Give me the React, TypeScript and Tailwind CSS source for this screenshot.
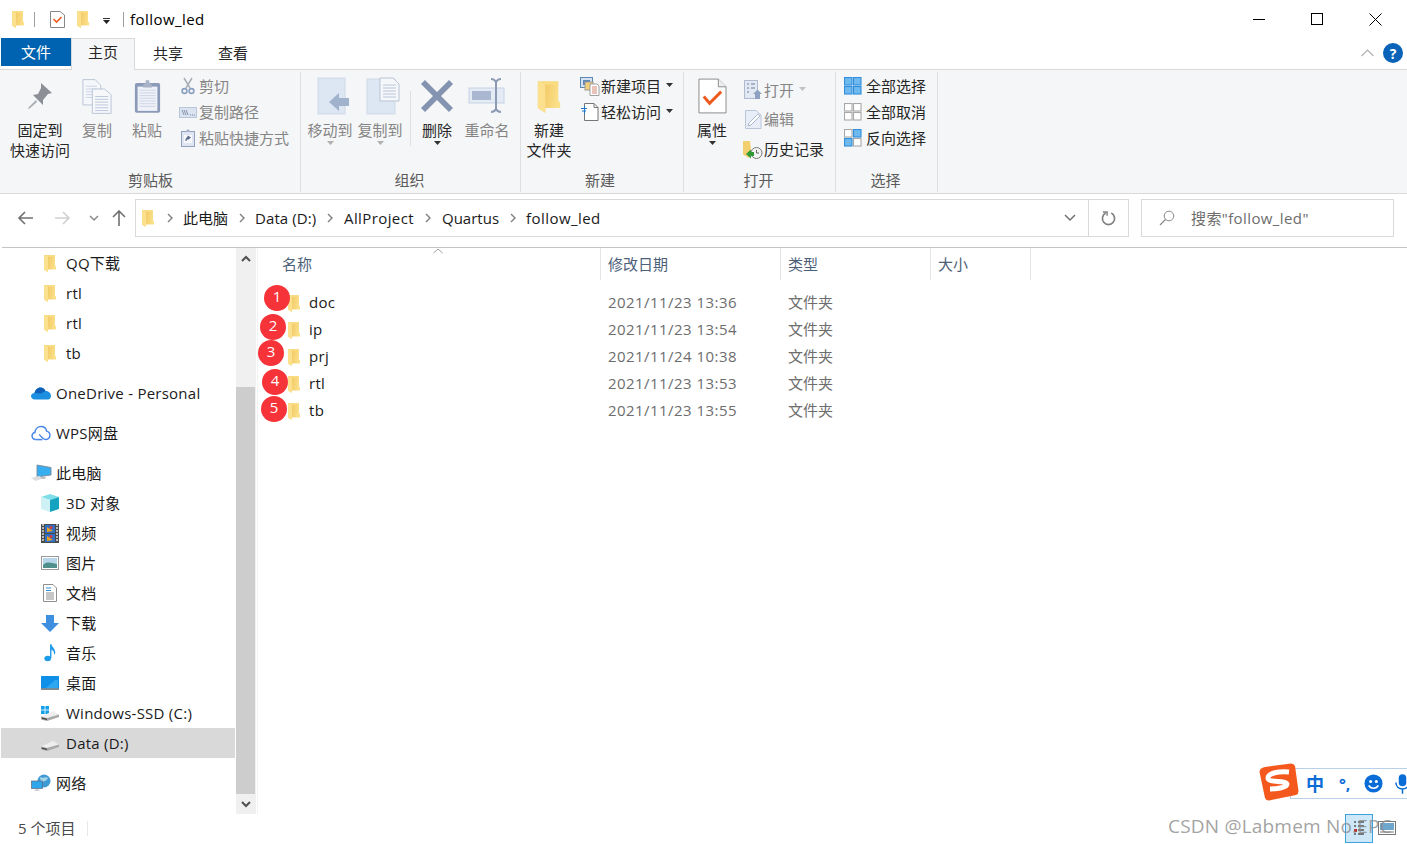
import React from "react";

const FONT = '"Open Sans","Noto Sans CJK SC",sans-serif';

function Folder({ className = "w-[14px] h-[18px]" }: { className?: string }) {
  const id = "f" + React.useId().replace(/[^a-zA-Z0-9]/g, "");
  return (
    <svg viewBox="0 0 14 18" className={className}>
      <defs>
        <linearGradient id={id} x1="0" y1="0" x2="1" y2="0.25">
          <stop offset="0" stopColor="#eebf55" />
          <stop offset="1" stopColor="#fbe08a" />
        </linearGradient>
      </defs>
      <path d="M1 1.2 H12 V11.5 L13 12.5 V15.5 H5 V18 L1 15.5 Z" fill={`url(#${id})`} />
      <path d="M1 1.2 H3 L5 3 V18 L1 15.5 Z" fill="#fbe08e" />
      <path d="M3 1.2 H12 V3 H5 Z" fill="#f9db80" />
    </svg>
  );
}

function Chevron({ className = "" }: { className?: string }) {
  return (
    <svg viewBox="0 0 8 10" className={`w-[8px] h-[10px] ${className}`}>
      <path d="M2 1 L6 5 L2 9" fill="none" stroke="#808080" strokeWidth="1.4" />
    </svg>
  );
}

function Caret({ color = "#333" }: { color?: string }) {
  return (
    <svg viewBox="0 0 7 4" className="w-[7px] h-[4px]">
      <path d="M0 0 H7 L3.5 4 Z" fill={color} />
    </svg>
  );
}

const PinIcon = () => (
  <svg viewBox="0 0 28 30" className="w-[28px] h-[30px]">
    <path d="M15 2 L26 12 L22 13 L17 19 L17 24 L7 14 L12 13 L15 7 Z" fill="#8c9096" />
    <path d="M10 19 L2 27 L3 28 L11 21 Z" fill="#a8acb2" />
  </svg>
);

const CopyIcon = () => (
  <svg viewBox="0 0 32 38" className="w-[30px] h-[37px]">
    <path d="M1 1 H14 L20 7 V28 H1 Z" fill="#f5f7fb" stroke="#b9c3d3" />
    <path d="M4 8 H16 M4 11 H16 M4 14 H16 M4 17 H16 M4 20 H16" stroke="#c8d2e2" />
    <path d="M11 11 H24 L31 17 V37 H11 Z" fill="#f5f7fb" stroke="#b9c3d3" />
    <path d="M14 19 H28 M14 22 H28 M14 25 H28 M14 28 H28 M14 31 H28 M14 34 H28" stroke="#b9c6da" />
  </svg>
);

const PasteIcon = () => (
  <svg viewBox="0 0 30 38" className="w-[27px] h-[37px]">
    <rect x="1" y="4" width="28" height="33" rx="2" fill="#8b9ab8" />
    <rect x="4" y="8" width="22" height="27" fill="#eef1f7" />
    <path d="M6 12 H24 M6 15 H24 M6 18 H24 M6 21 H24 M6 24 H24 M6 27 H24 M6 30 H24" stroke="#ccd4e4" />
    <path d="M10 6 L13 4 V1 H17 V4 L20 6 V9 H10 Z" fill="#a7b2c8" />
  </svg>
);

const ScissorsIcon = () => (
  <svg viewBox="0 0 14 18" className="w-[14px] h-[18px]">
    <path d="M3 1 L9 11 M11 1 L5 11" stroke="#a9aeb6" strokeWidth="1.5" fill="none" />
    <circle cx="3.5" cy="14" r="2.4" fill="none" stroke="#8ba0c0" strokeWidth="1.6" />
    <circle cx="10.5" cy="14" r="2.4" fill="none" stroke="#8ba0c0" strokeWidth="1.6" />
  </svg>
);

const PathIcon = () => (
  <svg viewBox="0 0 18 11" className="w-[18px] h-[11px]">
    <rect x="0.5" y="0.5" width="17" height="10" fill="#dbe3f0" stroke="#b9c6da" />
    <path d="M3 3 L5 8 M5 3 L7 8 M7 3 L9 8" stroke="#6f7f9a" strokeWidth="0.8" />
    <path d="M11 8 H12 M13 8 H14 M15 8 H16" stroke="#6f7f9a" />
  </svg>
);

const ShortcutIcon = () => (
  <svg viewBox="0 0 14 18" className="w-[14px] h-[18px]">
    <rect x="0.5" y="2.5" width="13" height="15" fill="#dfe6f1" stroke="#92a2bc" />
    <path d="M5 3 L6 0.5 H8 L9 3 Z" fill="#a7b2c8" />
    <rect x="3" y="6" width="8" height="8" fill="#f7f9fc" />
    <path d="M5 12 C5 9.5 6 8.5 8 8.5 M6.5 7 L9 8.5 L6.5 10.5" stroke="#5f708e" strokeWidth="1.3" fill="none" />
  </svg>
);

const MoveIcon = () => (
  <svg viewBox="0 0 32 38" className="w-[32px] h-[38px] ml-[6px]">
    <rect x="1" y="1" width="27" height="36" fill="#dde6f3" stroke="#cfd9e8" />
    <path d="M12 25 L22 16 V21 H32 V29 H22 V34 Z" fill="#a1b2cc" />
  </svg>
);

const CopyToIcon = () => (
  <svg viewBox="0 0 34 38" className="w-[34px] h-[38px] ml-[6px]">
    <rect x="1" y="2" width="28" height="35" fill="#dde6f3" stroke="#cfd9e8" />
    <path d="M14 1 H27 L33 7 V24 H14 Z" fill="#f5f7fb" stroke="#b9c3d3" />
    <path d="M17 8 H30 M17 11 H30 M17 14 H30 M17 17 H30 M17 20 H30" stroke="#b9c6da" />
  </svg>
);

const DeleteIcon = () => (
  <svg viewBox="0 0 32 32" className="w-[32px] h-[32px]">
    <path d="M4 0 L16 12 L28 0 L32 4 L20 16 L32 28 L28 32 L16 20 L4 32 L0 28 L12 16 L0 4 Z" fill="#8494b0" />
  </svg>
);

const RenameIcon = () => (
  <svg viewBox="0 0 38 36" className="w-[38px] h-[36px]">
    <rect x="1" y="10" width="35" height="15" fill="#e5ebf4" stroke="#c6d2e4" />
    <rect x="4" y="13" width="19" height="9" fill="#a9b8d0" />
    <path d="M23 1 C26 1 27 2 28 4 C29 2 30 1 33 1 M28 4 V31 M23 34 C26 34 27 33 28 31 C29 33 30 34 33 34" stroke="#8c9bb3" strokeWidth="2" fill="none" />
  </svg>
);

const NewItemIcon = () => (
  <svg viewBox="0 0 20 19" className="w-[20px] h-[19px]">
    <rect x="0.5" y="0.5" width="12" height="10" fill="#d4e2f3" stroke="#5a88b0" />
    <rect x="3" y="3" width="7" height="5" fill="#5e88b8" />
    <rect x="5" y="5" width="8" height="8" fill="#f1d27a" stroke="#9a9a9a" />
    <path d="M10 7 H17 L19 9 V18.5 H10 Z" fill="#fff" stroke="#8c8c8c" strokeWidth="0.8" />
    <path d="M12 10 H17 M12 12 H17 M12 14 H17 M12 16 H17" stroke="#c86a4e" strokeWidth="0.8" />
  </svg>
);

const EasyIcon = () => (
  <svg viewBox="0 0 18 18" className="w-[18px] h-[18px]">
    <path d="M3.5 0.5 H13 L17 4.5 V17.5 H3.5 Z" fill="#fff" stroke="#777" />
    <path d="M13 0.5 V4.5 H17" fill="none" stroke="#777" />
    <path d="M0 5.5 H6 M1 8 H5" stroke="#1f78c8" strokeWidth="1.1" />
    <path d="M3.5 3 V11" stroke="#1f78c8" />
  </svg>
);

const PropsIcon = () => (
  <svg viewBox="0 0 30 37" className="w-[29px] h-[36px]">
    <path d="M1 1 H21 L29 9 V36 H1 Z" fill="#fff" stroke="#8a8a8a" />
    <path d="M21 1 V9 H29" fill="#eee" stroke="#8a8a8a" />
    <path d="M6 19 L12 26 L24 14" fill="none" stroke="#ee5a1e" strokeWidth="3" />
  </svg>
);

const OpenIcon = () => (
  <svg viewBox="0 0 18 20" className="w-[18px] h-[20px]">
    <rect x="0.5" y="0.5" width="13" height="18" fill="#e3e9f3" stroke="#aebbd0" />
    <path d="M3 4 H5 M7 4 H11 M3 8 H5 M7 8 H11 M3 12 H5" stroke="#93a3bd" strokeWidth="1.5" />
    <path d="M9 14 L13.5 9.5 L18 14 H16 V19 H11 V14 Z" fill="#8ea1c0" />
  </svg>
);

const EditIcon = () => (
  <svg viewBox="0 0 17 19" className="w-[17px] h-[19px]">
    <path d="M0.5 0.5 H11 L16 5 V18.5 H0.5 Z" fill="#e8eef7" stroke="#b9c6da" />
    <path d="M13 4 L15 6 L6 15 L3 16 L4 13 Z" fill="#fff" stroke="#adb9cc" />
  </svg>
);

const HistoryIcon = () => (
  <svg viewBox="0 0 20 18" className="w-[20px] h-[18px]">
    <path d="M0 0 H7 L8 9 L10 11 L6 17 L0 13.5 Z" fill="#f2d06f" />
    <circle cx="13.5" cy="12" r="5.5" fill="#f3f3f3" stroke="#7a7a7a" />
    <path d="M13.5 9 V12 H16" stroke="#666" fill="none" />
    <path d="M3 13 L8 8.5 V11 H11 V15 H8 V17.5 Z" fill="#2f9a36" />
  </svg>
);

function Squares({ filled }: { filled: "all" | "none" | "invert" }) {
  const blue = { fill: "#6fb9ee", stroke: "#2f8fdc" };
  const empty = { fill: "#fff", stroke: "#a8a8a8" };
  const cells = [
    [1, 1, filled === "all" ? blue : empty],
    [10, 1, filled === "none" ? empty : blue],
    [1, 10, filled === "none" ? empty : blue],
    [10, 10, filled === "all" ? blue : empty],
  ] as const;
  return (
    <svg viewBox="0 0 18 18" className="w-[18px] h-[18px] mr-[4px]">
      {cells.map(([x, y, s], i) => (
        <rect key={i} x={x - 0.5} y={y - 0.5} width="7.5" height="7.5" strokeWidth="1.1" {...s} />
      ))}
    </svg>
  );
}

function Large({ width, lines, icon, gray, caret }: { width: string; lines: string[]; icon: React.ReactNode; gray?: boolean; caret?: boolean }) {
  return (
    <div className={`${width} flex flex-col items-center shrink-0`}>
      <div className="h-[48px] flex items-center justify-center">{icon}</div>
      <div className={`flex flex-col items-center text-[15px] leading-[20px] whitespace-nowrap ${gray ? "text-[#858585]" : "text-[#262626]"}`}>
        {lines.map((l) => (
          <div key={l}>{l}</div>
        ))}
      </div>
      {caret && (
        <div className="mt-[1px]">
          <Caret color={gray ? "#b0b0b0" : "#333"} />
        </div>
      )}
    </div>
  );
}

function Small({ icon, label, gray, caret, h = "h-[26px]" }: { icon: React.ReactNode; label: string; gray?: boolean; caret?: string; h?: string }) {
  return (
    <div className={`${h} flex items-center whitespace-nowrap text-[15px] ${gray ? "text-[#858585]" : "text-[#262626]"}`}>
      <div className="w-[22px] flex justify-center shrink-0">{icon}</div>
      <span>{label}</span>
      {caret && (
        <span className="ml-[5px] mb-[2px] flex">
          <Caret color={caret} />
        </span>
      )}
    </div>
  );
}

function Group({ width, label, labelPad = "pr-[2px]", children }: { width: string; label: string; labelPad?: string; children: React.ReactNode }) {
  return (
    <div className={`${width} shrink-0 h-[120px] mt-[2px] border-r border-[#dcdfe3] flex flex-col`}>
      <div className="h-[98px] flex">{children}</div>
      <div className={`h-[20px] ${labelPad} flex items-center justify-center text-[15px] text-[#5a5a5a]`}>{label}</div>
    </div>
  );
}

function NavRow({ icon, label, indent, selected }: { icon: React.ReactNode; label: string; indent?: boolean; selected?: boolean }) {
  return (
    <div className={`h-[30px] flex items-center text-[15px] tracking-[0.25px] text-[#1a1a1a] whitespace-nowrap ${selected ? "bg-[#d9d9d9]" : ""} ${indent ? "pl-[39px]" : "pl-[30px]"}`}>
      <div className={`${indent ? "w-[26px] pr-[6px] justify-center" : "w-[25px]"} flex items-center shrink-0`}>{icon}</div>
      <span className="pt-[1px]">{label}</span>
    </div>
  );
}

const OneDrive = () => (
  <svg viewBox="0 0 20 13" className="w-[20px] h-[13px]">
    <path d="M4 12.5 C1 12.5 0 10.5 0 9 C0 7 2 6 3.5 6 C4 3 6.5 0.5 9.5 0.5 C12 0.5 13.5 2 14.5 4 C17.5 4 20 6 20 9 C20 11 18.5 12.5 17 12.5 Z" fill="#1c8fe0" />
    <path d="M3.5 6 C4 3 6.5 0.5 9.5 0.5 C12 0.5 13.5 2 14.5 4 L10 6.5 Z" fill="#0f5fb8" />
  </svg>
);
const Wps = () => (
  <svg viewBox="0 0 21 17" className="w-[20px] h-[16px]">
    <path d="M5 15.5 C2 15.5 1 13 1 11.5 C1 9.5 2.5 8 4 8 C4.5 4 7.5 1.5 10.5 1.5 C14 1.5 16 4 16.5 6.5 C18.5 7 20 9 20 11 C20 13.5 18 15.5 16 15.5 C13 15.5 11 13 8.5 10 " fill="none" stroke="#4a86e8" strokeWidth="1.6" />
    <path d="M5 15.5 H12" stroke="#4a86e8" strokeWidth="1.6" />
  </svg>
);
const Pc = () => (
  <svg viewBox="0 0 21 18" className="w-[21px] h-[18px]">
    <path d="M6 1 L20 3.5 V11 L6 13 Z" fill="#38aef0" stroke="#7a8a98" strokeWidth="0.9" />
    <path d="M0 14 L8 12 L13 14 L5 17 Z" fill="#dedede" />
    <path d="M9 13 L15 13 L14 15 L11 15 Z" fill="#c0c0c0" />
  </svg>
);
const Cube = () => (
  <svg viewBox="0 0 18 18" className="w-[18px] h-[18px]">
    <path d="M9 0 L18 3 L9 6 L0 3 Z" fill="#7fdfe8" />
    <path d="M0 3 L9 6 V18 L0 15 Z" fill="#cdf1f4" />
    <path d="M9 6 L18 3 V15 L9 18 Z" fill="#14a4c0" />
  </svg>
);
const Film = () => (
  <svg viewBox="0 0 18 19" className="w-[18px] h-[19px]">
    <rect width="18" height="19" fill="#4a4a4a" />
    <path d="M1 1 H3 M1 4 H3 M1 7 H3 M1 10 H3 M1 13 H3 M1 16 H3 M15 1 H17 M15 4 H17 M15 7 H17 M15 10 H17 M15 13 H17 M15 16 H17" stroke="#ddd" strokeWidth="1.5" />
    <rect x="4" y="1" width="10" height="8" fill="#2f6fc4" />
    <rect x="4" y="10" width="10" height="8" fill="#2f6fc4" />
    <path d="M6 3 L12 7 L6 8 Z M6 12 L12 16 L6 17 Z" fill="#e8a020" />
    <circle cx="10" cy="3.5" r="1.5" fill="#d83a3a" />
    <circle cx="10" cy="12.5" r="1.5" fill="#d83a3a" />
  </svg>
);
const Pic = () => (
  <svg viewBox="0 0 18 14" className="w-[18px] h-[14px]">
    <rect x="0.5" y="0.5" width="17" height="13" fill="#fff" stroke="#9a9a9a" />
    <rect x="2" y="2" width="14" height="10" fill="#b8d6ea" />
    <path d="M2 9 C6 5 10 7 16 8 V12 H2 Z" fill="#4f8f8c" />
  </svg>
);
const Doc = () => (
  <svg viewBox="0 0 14 18" className="w-[14px] h-[18px]">
    <path d="M0.5 0.5 H10 L13.5 4 V17.5 H0.5 Z" fill="#fff" stroke="#8f8f8f" />
    <path d="M3 4 H8 M3 6.5 H8" stroke="#2f8fdc" strokeWidth="1.2" />
    <path d="M3 9 H11 M3 11 H11 M3 13 H11 M3 15 H11" stroke="#8f8f8f" />
  </svg>
);
const Down = () => (
  <svg viewBox="0 0 18 17" className="w-[18px] h-[17px]">
    <path d="M5 0 H13 V8 H18 L9 17 L0 8 H5 Z" fill="#3f8fe0" />
  </svg>
);
const Music = () => (
  <svg viewBox="0 0 14 19" className="w-[13px] h-[18px]">
    <ellipse cx="4" cy="15.5" rx="3.6" ry="3" fill="#1e9be8" />
    <path d="M6.5 15 V0 H8 C8.5 3 11.5 4 12 8 C12.5 10 11.5 11 11 11.5 C11 8 9.5 6.5 8 6 V15 Z" fill="#1e9be8" />
  </svg>
);
const Desktop = () => (
  <svg viewBox="0 0 18 14" className="w-[18px] h-[14px]">
    <rect width="18" height="12.5" rx="0.5" fill="#0e8fe8" />
    <path d="M5 12 L14 4 L17 4 L17 12 Z" fill="#2ea6f0" />
    <rect x="0" y="12.5" width="18" height="1.2" fill="#555" />
  </svg>
);
const Drive = ({ win }: { win?: boolean }) => (
  <svg viewBox="0 0 18 15" className="w-[18px] h-[15px]">
    {win && (
      <g fill="#14a0e8">
        <rect x="0" y="0" width="3.6" height="3.6" />
        <rect x="4.4" y="0" width="3.6" height="3.6" />
        <rect x="0" y="4.4" width="3.6" height="3.6" />
        <rect x="4.4" y="4.4" width="3.6" height="3.6" />
      </g>
    )}
    <path d="M0 10.5 L12 5 L18 8.5 L6 12 Z" fill="#eeeeee" />
    <path d="M0 10.5 L6 12 L18 8.5 V11 L6 15 L0 13.5 Z" fill="#a9a9a9" />
    <path d="M1 11.5 L6 12.8 V14 L1 12.8 Z" fill="#3f3f3f" />
  </svg>
);
const Network = () => (
  <svg viewBox="0 0 20 18" className="w-[20px] h-[18px]">
    <circle cx="13" cy="7" r="6.5" fill="#3f9ad4" />
    <path d="M9 3 C12 5 15 2 17 4 C15 8 12 7 10 9 Z" fill="#a9d5ea" />
    <rect x="0.5" y="7" width="11" height="7.5" fill="#2ea6ec" stroke="#5a6a78" strokeWidth="0.7" />
    <path d="M3 17 L9 17 L7 15 H5 Z" fill="#cfcfcf" />
  </svg>
);

const NumberBadge = ({ n, className }: { n: number; className: string }) => (
  <div className={`absolute w-[26px] h-[26px] rounded-full bg-[#f53339] text-white flex items-center justify-center text-[15px] leading-none pb-[3px] ${className}`}>{n}</div>
);

const files = [
  ["doc", "2021/11/23 13:36"],
  ["ip", "2021/11/23 13:54"],
  ["prj", "2021/11/24 10:38"],
  ["rtl", "2021/11/23 13:53"],
  ["tb", "2021/11/23 13:55"],
];

export default function App() {
  return (
    <div className="relative w-[1407px] h-[844px] overflow-hidden bg-white flex flex-col" style={{ fontFamily: FONT }}>
      {/* Title bar */}
      <div className="h-[38px] flex items-center shrink-0">
        <div className="ml-[11px] flex items-center">
          <Folder />
        </div>
        <div className="ml-[9px] w-px h-[15px] bg-[#a0a0a0]" />
        <svg viewBox="0 0 15 17" className="ml-[15px] w-[15px] h-[17px]">
          <path d="M0.5 0.5 H10 L14.5 4 V16.5 H0.5 Z" fill="#fff" stroke="#888" />
          <path d="M3.5 8 L6.5 11 L11.5 6" fill="none" stroke="#ee5a1e" strokeWidth="1.6" />
        </svg>
        <div className="ml-[11px] flex">
          <Folder />
        </div>
        <div className="ml-[13px] mt-[4px] flex flex-col items-center gap-[1px]">
          <div className="w-[7px] h-px bg-[#333]" />
          <Caret color="#222" />
        </div>
        <div className="ml-[13px] w-px h-[15px] bg-[#a0a0a0]" />
        <span className="ml-[6px] text-[15px] tracking-[0.45px] text-black">follow_led</span>
        <div className="ml-auto flex items-center">
          <div className="w-[56px] flex justify-center">
            <div className="w-[12px] h-px bg-black" />
          </div>
          <div className="w-[60px] flex justify-center">
            <div className="w-[12px] h-[12px] border border-black" />
          </div>
          <div className="w-[60px] pr-[3px] flex justify-center">
            <svg viewBox="0 0 13 13" className="w-[13px] h-[13px]">
              <path d="M0.5 0.5 L12.5 12.5 M12.5 0.5 L0.5 12.5" stroke="#000" />
            </svg>
          </div>
        </div>
      </div>

      {/* Tabs */}
      <div className="h-[32px] shrink-0 flex border-b border-[#d9d9d9] pl-px text-[15px] relative">
        <div className="w-[70px] h-[28px] bg-[#0063b1] text-white flex items-center justify-center">文件</div>
        <div className="w-[64px] h-[32px] pb-[4px] bg-[#f5f6f7] border border-b-0 border-[#d9d9d9] flex items-center justify-center text-[#262626]">主页</div>
        <div className="w-[66px] h-[30px] flex items-center justify-center text-[#262626]">共享</div>
        <div className="w-[64px] h-[30px] flex items-center justify-center text-[#262626]">查看</div>
        <div className="ml-auto mr-[4px] h-[30px] flex items-center gap-[9px]">
          <svg viewBox="0 0 13 8" className="w-[13px] h-[8px]">
            <path d="M0.5 7 L6.5 1 L12.5 7" fill="none" stroke="#b0b0b0" strokeWidth="1.2" />
          </svg>
          <div className="w-[20px] h-[20px] rounded-full bg-[#0a63b8] text-white text-[14px] font-bold flex items-center justify-center">?</div>
        </div>
      </div>

      {/* Ribbon */}
      <div className="h-[124px] shrink-0 bg-[#f5f6f7] border-b border-[#d9d9d9] flex pl-px">
        <Group width="w-[300px]" label="剪贴板" labelPad="pr-0">
          <Large width="w-[78px]" lines={["固定到", "快速访问"]} icon={<PinIcon />} />
          <Large width="w-[50px] -ml-[7px]" lines={["复制"]} gray icon={<CopyIcon />} />
          <Large width="w-[50px]" lines={["粘贴"]} gray icon={<PasteIcon />} />
          <div className="flex flex-col pt-[1px] ml-[5px]">
            <Small gray icon={<ScissorsIcon />} label="剪切" />
            <Small gray icon={<PathIcon />} label="复制路径" />
            <Small gray icon={<ShortcutIcon />} label="粘贴快捷方式" />
          </div>
        </Group>
        <Group width="w-[220px]" label="组织">
          <Large width="w-[50px] ml-[4px]" lines={["移动到"]} gray caret icon={<MoveIcon />} />
          <Large width="w-[50px]" lines={["复制到"]} gray caret icon={<CopyToIcon />} />
          <div className="w-px h-[55px] bg-[#dcdfe3] mt-[19px] ml-[5px]" />
          <Large width="w-[52px]" lines={["删除"]} caret icon={<DeleteIcon />} />
          <Large width="w-[48px]" lines={["重命名"]} gray icon={<RenameIcon />} />
        </Group>
        <Group width="w-[163px]" label="新建" labelPad="pr-[4px]">
          <Large width="w-[56px]" lines={["新建", "文件夹"]} icon={<Folder className="w-[26px] h-[36px]" />} />
          <div className="flex flex-col pt-[1px] pl-[2px]">
            <Small caret="#333" icon={<NewItemIcon />} label="新建项目" />
            <Small caret="#333" icon={<EasyIcon />} label="轻松访问" />
          </div>
        </Group>
        <Group width="w-[152px]" label="打开">
          <Large width="w-[56px]" lines={["属性"]} caret icon={<PropsIcon />} />
          <div className="flex flex-col pt-[3px] pl-[2px]">
            <Small gray caret="#c0c0c0" h="h-[30px]" icon={<OpenIcon />} label="打开" />
            <Small gray h="h-[29px]" icon={<EditIcon />} label="编辑" />
            <Small h="h-[31px]" icon={<HistoryIcon />} label="历史记录" />
          </div>
        </Group>
        <Group width="w-[102px]" label="选择">
          <div className="flex flex-col pt-[1px] pl-[8px]">
            <Small icon={<Squares filled="all" />} label="全部选择" />
            <Small icon={<Squares filled="none" />} label="全部取消" />
            <Small icon={<Squares filled="invert" />} label="反向选择" />
          </div>
        </Group>
      </div>

      {/* Address row */}
      <div className="h-[54px] shrink-0 border-b border-[#c4c4c4] ml-[2px] flex items-start pt-[5px] pr-[13px]">
        <div className="h-[38px] flex items-center">
          <svg viewBox="0 0 16 14" className="ml-[15px] w-[16px] h-[14px]">
            <path d="M8 1 L2 7 L8 13 M2 7 H16" fill="none" stroke="#707070" strokeWidth="1.6" />
          </svg>
          <svg viewBox="0 0 16 14" className="ml-[22px] w-[16px] h-[14px]">
            <path d="M8 1 L14 7 L8 13 M14 7 H0" fill="none" stroke="#d0d0d0" strokeWidth="1.6" />
          </svg>
          <svg viewBox="0 0 10 7" className="ml-[18px] w-[10px] h-[7px]">
            <path d="M1 1 L5 5 L9 1" fill="none" stroke="#8a8a8a" strokeWidth="1.5" />
          </svg>
          <svg viewBox="0 0 14 16" className="ml-[13px] w-[14px] h-[16px]">
            <path d="M1 7 L7 1 L13 7 M7 1 V16" fill="none" stroke="#707070" strokeWidth="1.6" />
          </svg>
        </div>
        <div className="ml-[9px] w-[954px] h-[38px] border border-[#d9d9d9] flex items-center text-[15px] text-[#1a1a1a] whitespace-nowrap">
          <div className="ml-[5px]">
            <Folder />
          </div>
          <Chevron className="ml-[11px]" />
          <span className="ml-[9px] w-[46px]">此电脑</span>
          <Chevron className="ml-[9px]" />
          <span className="ml-[9px] w-[62px] tracking-[0.1px]">Data (D:)</span>
          <Chevron className="ml-[9px]" />
          <span className="ml-[10px] w-[71px] tracking-[0.4px]">AllProject</span>
          <Chevron className="ml-[9px]" />
          <span className="ml-[10px] w-[57px]">Quartus</span>
          <Chevron className="ml-[10px]" />
          <span className="ml-[9px] tracking-[0.45px]">follow_led</span>
          <svg viewBox="0 0 12 8" className="ml-auto mr-[12px] w-[12px] h-[8px]">
            <path d="M1 1 L6 6 L11 1" fill="none" stroke="#707070" strokeWidth="1.5" />
          </svg>
        </div>
        <div className="w-[40px] h-[38px] border border-l-0 border-[#d9d9d9] flex items-center justify-center">
          <svg viewBox="0 0 16 16" className="w-[15px] h-[15px]">
            <path d="M5 2.2 A6.5 6.5 0 1 0 11 2.2" fill="none" stroke="#808080" strokeWidth="1.8" />
            <path d="M2 1 L6.5 1 L6.5 5" fill="none" stroke="#808080" strokeWidth="1.5" />
          </svg>
        </div>
        <div className="ml-[12px] flex-1 h-[38px] border border-[#d9d9d9] flex items-center text-[15px] text-[#6d6d6d] whitespace-nowrap">
          <svg viewBox="0 0 16 16" className="ml-[17px] w-[16px] h-[16px]">
            <circle cx="10" cy="6" r="4.8" fill="none" stroke="#8a8a8a" />
            <path d="M6.5 9.5 L1 15" stroke="#8a8a8a" strokeWidth="1.2" />
          </svg>
          <span className="ml-[16px] tracking-[0.4px]">搜索"follow_led"</span>
        </div>
      </div>

      {/* Body */}
      <div className="flex-1 flex min-h-0">
        <div className="w-[236px] shrink-0 px-px">
          <NavRow indent icon={<Folder />} label="QQ下载" />
          <NavRow indent icon={<Folder />} label="rtl" />
          <NavRow indent icon={<Folder />} label="rtl" />
          <NavRow indent icon={<Folder />} label="tb" />
          <div className="h-[10px]" />
          <NavRow icon={<OneDrive />} label="OneDrive - Personal" />
          <div className="h-[10px]" />
          <NavRow icon={<Wps />} label="WPS网盘" />
          <div className="h-[10px]" />
          <NavRow icon={<Pc />} label="此电脑" />
          <NavRow indent icon={<Cube />} label="3D 对象" />
          <NavRow indent icon={<Film />} label="视频" />
          <NavRow indent icon={<Pic />} label="图片" />
          <NavRow indent icon={<Doc />} label="文档" />
          <NavRow indent icon={<Down />} label="下载" />
          <NavRow indent icon={<Music />} label="音乐" />
          <NavRow indent icon={<Desktop />} label="桌面" />
          <NavRow indent icon={<Drive win />} label="Windows-SSD (C:)" />
          <NavRow indent selected icon={<Drive />} label="Data (D:)" />
          <div className="h-[10px]" />
          <NavRow icon={<Network />} label="网络" />
        </div>
        {/* Scrollbar */}
        <div className="w-[20px] shrink-0 bg-[#f0f0f0] flex flex-col">
          <div className="h-[20px] flex items-center justify-center">
            <svg viewBox="0 0 10 7" className="w-[10px] h-[7px]">
              <path d="M1 6 L5 2 L9 6" fill="none" stroke="#505050" strokeWidth="2" />
            </svg>
          </div>
          <div className="h-[119px]" />
          <div className="flex-1 bg-[#cdcdcd] mr-px" />
          <div className="h-[20px] flex items-center justify-center">
            <svg viewBox="0 0 10 7" className="w-[10px] h-[7px]">
              <path d="M1 1 L5 5 L9 1" fill="none" stroke="#505050" strokeWidth="2" />
            </svg>
          </div>
        </div>
        {/* File list */}
        <div className="flex-1 relative border-l border-[#f2f2f2] ml-px">
          <div className="h-[32px] flex items-center text-[15px] text-[#4c607a] relative">
            <div className="w-[343px] h-[32px] pl-[24px] flex items-center border-r border-[#e5e5e5]">名称</div>
            <div className="w-[180px] h-[32px] pl-[7px] flex items-center border-r border-[#e5e5e5]">修改日期</div>
            <div className="w-[150px] h-[32px] pl-[7px] flex items-center border-r border-[#e5e5e5]">类型</div>
            <div className="w-[100px] h-[32px] pl-[7px] flex items-center border-r border-[#e5e5e5]">大小</div>
            <svg viewBox="0 0 10 6" className="absolute left-[175px] top-0 w-[10px] h-[6px]">
              <path d="M0.5 5 L5 1 L9.5 5" fill="none" stroke="#a0a0a0" />
            </svg>
          </div>
          <div className="pt-[9px]">
            {files.map(([name, date]) => (
              <div key={name} className="h-[27px] flex items-center text-[15px] tracking-[0.3px]">
                <div className="ml-[29px] w-[22px] flex">
                  <Folder />
                </div>
                <span className="w-[299px] text-[#1a1a1a]">{name}</span>
                <span className="w-[180px] tracking-[0.45px] text-[#6d6d6d]">{date}</span>
                <span className="tracking-normal text-[#6d6d6d]">文件夹</span>
              </div>
            ))}
          </div>
          <NumberBadge n={1} className="left-[6px] top-[37px]" />
          <NumberBadge n={2} className="left-[2px] top-[66px]" />
          <NumberBadge n={3} className="left-0 top-[92px]" />
          <NumberBadge n={4} className="left-[4px] top-[121px]" />
          <NumberBadge n={5} className="left-[3px] top-[148px]" />
        </div>
      </div>

      {/* Status bar */}
      <div className="h-[30px] shrink-0 pb-[1px] flex items-center text-[15px] text-[#4a4a4a] pl-[18px] relative">
        <span>5 个项目</span>
        <div className="ml-[12px] w-px h-[15px] bg-[#e8e8e8]" />
        <div className="absolute left-[1345px] top-0 w-[28px] h-[29px] border border-[#3fa2e0] bg-[#cfe8f8] flex items-center justify-center">
          <svg viewBox="0 0 12 16" className="w-[12px] h-[16px]">
            <path d="M1 1 H3 M5 1 H11 M1 5 H3 M5 5 H11 M1 9 H3 M5 9 H11 M1 13 H3 M5 13 H11" stroke="#555" strokeWidth="1.5" />
            <rect x="1" y="8" width="3" height="3" fill="#c43030" />
          </svg>
        </div>
        <svg viewBox="0 0 18 14" className="absolute left-[1378px] top-[7px] w-[18px] h-[14px]">
          <rect x="0.5" y="0.5" width="17" height="13" fill="#fff" stroke="#777" />
          <rect x="2" y="2" width="14" height="7" fill="#6fa6cc" />
          <path d="M2 11 H16" stroke="#777" />
        </svg>
        <span className="absolute left-[1168px] top-[-2px] text-[19px] tracking-[0.2px] text-[#8a8a8a]/80 whitespace-nowrap">CSDN @Labmem No.EPC</span>
      </div>

      {/* Sogou IME overlay */}
      <div className="absolute left-[1290px] top-[768px] w-[130px] h-[31px] bg-white border border-[#b9cfe8] flex items-center text-[#0a6cd6]">
        <span className="ml-[15px] text-[18px] font-bold leading-none">中</span>
        <span className="ml-[15px] text-[16px] font-bold leading-none">°,</span>
        <svg viewBox="0 0 20 20" className="ml-[14px] w-[19px] h-[19px]">
          <circle cx="10" cy="10" r="9.5" fill="#0a6cd6" />
          <circle cx="7" cy="8" r="1.6" fill="#fff" />
          <circle cx="13" cy="8" r="1.6" fill="#fff" />
          <path d="M5 12 C7 16 13 16 15 12" stroke="#fff" strokeWidth="1.6" fill="none" />
        </svg>
        <svg viewBox="0 0 16 22" className="ml-[12px] w-[15px] h-[21px]">
          <rect x="4" y="1" width="8" height="13" rx="4" fill="#0a6cd6" />
          <path d="M1 10 C1 19 15 19 15 10 M8 17 V22" stroke="#0a6cd6" strokeWidth="1.6" fill="none" />
        </svg>
      </div>
      <svg viewBox="0 0 40 38" className="absolute left-[1259px] top-[763px] w-[40px] h-[38px]">
        <path d="M6 4 L32 0.5 Q35 0.5 36 3 L39.5 28 Q39.5 31 37 32 L10 37.5 Q7 37.5 6 35 L0.5 9 Q0.5 5 6 4 Z" fill="#f4581c" />
        <path d="M30 9 C20 8 9 10 9 15 C9 20 27 17 28 21 C28 25 16 26 11 26" fill="none" stroke="#fff" strokeWidth="5" />
      </svg>
    </div>
  );
}
